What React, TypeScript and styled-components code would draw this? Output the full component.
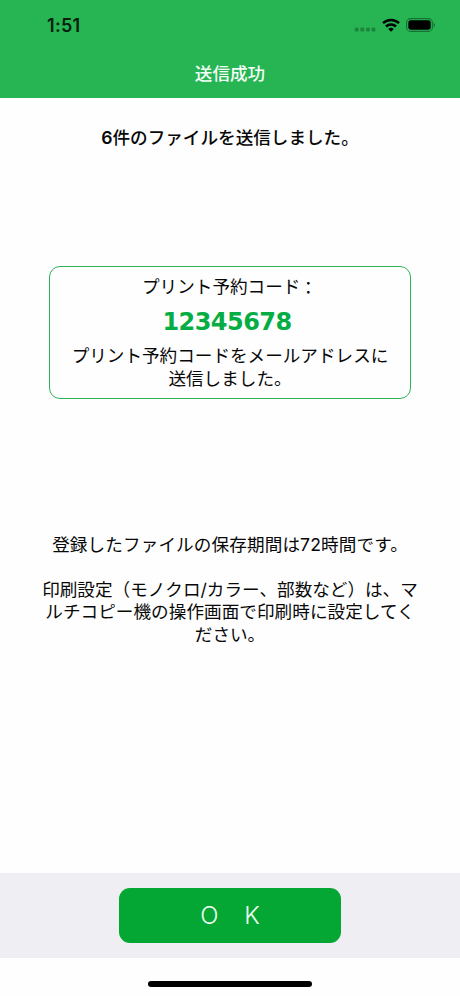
import React from "react";
import styled, { createGlobalStyle } from "styled-components";

const GlobalStyle = createGlobalStyle`
  * { box-sizing: border-box; }
  body {
    margin: 0;
    background: #fefefe;
    color: #080808;
    font-family: Inter, "Noto Sans CJK JP", sans-serif;
  }
`;

const Screen = styled.div`
  width: 460px;
  height: 996px;
  display: flex;
  flex-direction: column;
  overflow: hidden;
`;

const Header = styled.header`
  height: 98px;
  background: #27b453;
  flex: none;
`;

const StatusBar = styled.div`
  height: 50px;
  padding: 0 24px 0 47px;
  display: flex;
  align-items: center;
  justify-content: space-between;
`;

const Clock = styled.span`
  font-size: 18px;
  font-weight: 600;
  letter-spacing: 0.3px;
  color: #03200b;
`;

const StatusIcons = styled.div`
  display: flex;
  align-items: center;
  gap: 6px;
`;

const Title = styled.h1`
  margin: 0;
  height: 46px;
  line-height: 46px;
  text-align: center;
  font-family: "Noto Sans CJK JP", sans-serif;
  font-size: 17.6px;
  font-weight: 500;
  color: #f4fff7;
`;

const Content = styled.main`
  flex: 1;
  display: flex;
  flex-direction: column;
  align-items: center;
`;

const Summary = styled.p`
  margin: 28px 0 0;
  line-height: 24px;
  font-size: 17.6px;
  font-weight: 500;
  white-space: nowrap;
`;

const Count = styled.span`
  font-weight: 600;
`;

const CodeCard = styled.section`
  margin-top: 116px;
  width: 362px;
  height: 133px;
  padding-top: 9px;
  border: 1.5px solid #2fb158;
  border-radius: 11px;
  text-align: center;
`;

const Line = styled.p<{ $spacing?: number }>`
  margin: 0;
  font-size: 17.6px;
  line-height: 22.4px;
  min-height: 22.4px;
  letter-spacing: ${(p) => p.$spacing ?? 0}px;
  text-align: center;
  white-space: nowrap;
`;

const Colon = styled.span`
  display: inline-block;
  transform: translate(-1px, 1px);
`;

const Code = styled.div`
  height: 47px;
  line-height: 49px;
  padding-right: 6px;
  font-family: Verdana, "DejaVu Sans", sans-serif;
  font-size: 24px;
  font-weight: 700;
  letter-spacing: -0.55px;
  color: #06ad44;
`;

const Notes = styled.section`
  margin-top: 135px;
`;

const Footer = styled.footer`
  height: 85px;
  padding-top: 15px;
  background: #eeeef3;
  display: flex;
  justify-content: center;
  align-items: flex-start;
  flex: none;
`;

const OkButton = styled.button`
  width: 222px;
  height: 55px;
  padding: 0;
  border: 0;
  border-radius: 11px;
  background: #04a733;
  color: #f2fff6;
  font-family: Inter, sans-serif;
  font-size: 24px;
  font-weight: 300;
  display: flex;
  justify-content: center;
  align-items: center;
  gap: 26px;
`;

const HomeArea = styled.div`
  height: 38px;
  padding-top: 23px;
  display: flex;
  justify-content: center;
  flex: none;
`;

const HomeIndicator = styled.div`
  width: 164px;
  height: 6px;
  border-radius: 3px;
  background: #000;
`;

const CellularDots = () => (
  <svg width="22" height="14" viewBox="0 0 22 14" fill="#1c843d">
    <rect x=".8" y="9.6" width="3.8" height="3.8" rx="1.2" />
    <rect x="6.4" y="9.6" width="3.8" height="3.8" rx="1.2" />
    <rect x="12" y="9.6" width="3.8" height="3.8" rx="1.2" />
    <rect x="17.6" y="9.6" width="3.8" height="3.8" rx="1.2" />
  </svg>
);

const WifiIcon = () => (
  <svg width="18" height="14" viewBox="0 0 18 14" fill="none" stroke="#000" strokeWidth="2.5">
    <path d="M1 5.2C5.5 .9 12.5 .9 17 5.2" />
    <path d="M4 8.5C6.8 5.8 11.2 5.8 14 8.5" />
    <path d="M9 13.7L6.2 10.9C7.8 9.5 10.2 9.5 11.8 10.9Z" fill="#000" stroke="none" />
  </svg>
);

const BatteryIcon = () => (
  <svg width="30" height="14" viewBox="0 0 30 14">
    <rect x=".6" y=".6" width="25.8" height="12.8" rx="4" fill="none" stroke="#147233" strokeWidth="1.1" />
    <rect x="2.3" y="2.3" width="22.4" height="9.4" rx="2.4" fill="#000" />
    <path d="M27.7 4.7C29.4 5.4 29.4 8.6 27.7 9.3Z" fill="#147233" />
  </svg>
);

export default function App() {
  return (
    <>
      <GlobalStyle />
      <Screen>
        <Header>
          <StatusBar>
            <Clock>1:51</Clock>
            <StatusIcons>
              <CellularDots />
              <WifiIcon />
              <BatteryIcon />
            </StatusIcons>
          </StatusBar>
          <Title>送信成功</Title>
        </Header>
        <Content>
          <Summary>
            <Count>6</Count>件のファイルを送信しました。
          </Summary>
          <CodeCard>
            <Line>
              プリント予約コード<Colon>：</Colon>
            </Line>
            <Code>12345678</Code>
            <Line>プリント予約コードをメールアドレスに</Line>
            <Line>送信しました。</Line>
          </CodeCard>
          <Notes>
            <Line $spacing={0.12}>登録したファイルの保存期間は72時間です。</Line>
            <Line />
            <Line>印刷設定（モノクロ/カラー、部数など）は、マ</Line>
            <Line $spacing={0.05}>ルチコピー機の操作画面で印刷時に設定してく</Line>
            <Line>ださい。</Line>
          </Notes>
        </Content>
        <Footer>
          <OkButton>
            <span>O</span>
            <span>K</span>
          </OkButton>
        </Footer>
        <HomeArea>
          <HomeIndicator />
        </HomeArea>
      </Screen>
    </>
  );
}
